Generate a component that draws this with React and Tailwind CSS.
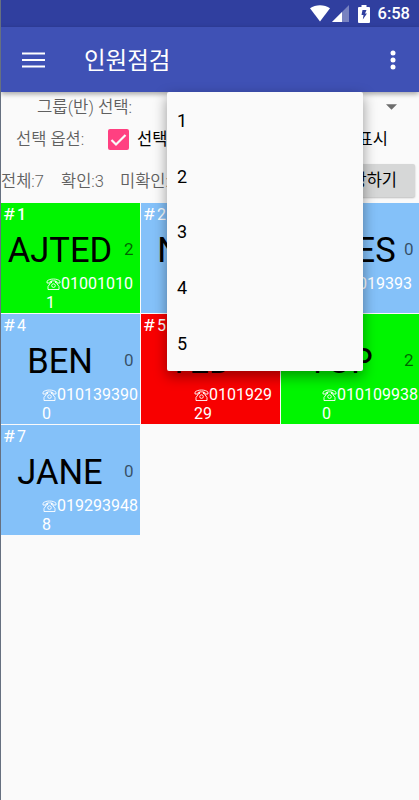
import React, { useState } from 'react';

const members = [
  { id: 1, name: 'AJTED', count: 2, phone: ['01001010', '1'], status: 'checked', bold: true, indent: 'pl-[45px]' },
  { id: 2, name: 'NATE', count: 0, phone: ['01012345', '6'], status: 'none', indent: 'pl-[45px]' },
  { id: 3, name: 'JAMES', count: 0, phone: ['01019393', '9'], status: 'none', indent: 'pl-[44px]' },
  { id: 4, name: 'BEN', count: 0, phone: ['010139390', '0'], status: 'none', indent: 'pl-[41px]' },
  { id: 5, name: 'TED', count: 1, phone: ['0101929', '29'], status: 'absent', indent: 'pl-[53px]' },
  { id: 6, name: 'TOP', count: 2, phone: ['010109938', '0'], status: 'checked', indent: 'pl-[41px]' },
  { id: 7, name: 'JANE', count: 0, phone: ['019293948', '8'], status: 'none', indent: 'pl-[41px]' },
];

const groups = [1, 2, 3, 4, 5];

// Background of a member cell
const getStatusClass = (status) => {
  switch (status) {
    case 'checked':
      return 'bg-[#00f500]';
    case 'absent':
      return 'bg-[#f80000]';
    default:
      return 'bg-[#84c1f9]';
  }
};

const StatusBar = () => (
  <div className="h-[27px] bg-[#303f9f] flex items-center justify-end pr-[9px] text-white">
    <svg width="20" height="17" viewBox="0 0 20 17" fill="currentColor">
      <path d="M0 3.200C5.500-.9 14.500-.9 20 3.200L10 16.500z" />
    </svg>
    <svg width="17" height="17" viewBox="0 0 17 17" className="ml-[2px]" fill="currentColor">
      <path d="M17 0v17H0z" opacity=".35" />
      <path d="M10 7v10H0z" />
    </svg>
    <svg width="12" height="18" viewBox="0 0 12 18" className="ml-[9px]" fill="currentColor">
      <path d="M3.500 0h5v2H11a1 1 0 0 1 1 1v14a1 1 0 0 1-1 1H1a1 1 0 0 1-1-1V3a1 1 0 0 1 1-1h2.500z" />
      <path d="M4.500 5h4L7 8.500h2L4.800 14.500l.7-4.500h-2z" fill="#303f9f" />
    </svg>
    <span className="ml-[8px] translate-y-px text-[16.5px] leading-none font-medium">6:58</span>
  </div>
);

const PhoneIcon = () => (
  <svg width="15" height="12" viewBox="0 0 15 12" className="mt-px" fill="none" stroke="currentColor" strokeWidth="0.9">
    <path d="M1 5V3.200C3.500.3 11.500.3 14 3.200V5h-3.200V3.500C9 2.600 6 2.600 4.200 3.500V5z" />
    <path d="M4.800 4.500L2 8.500v3h11v-3l-2.800-4M5.500 3v2M9.500 3v2" />
    <circle cx="7.500" cy="7.600" r="1.800" />
  </svg>
);

const MemberCell = ({ member }) => (
  <div className={`${getStatusClass(member.status)} h-[110px] overflow-hidden`}>
    <div className="flex h-[23px] gap-[3px] pl-[2px] text-[16px] leading-[23px] text-white">
      <span className="w-[11px] origin-left scale-x-[1.2]">#</span>
      <span className={member.bold ? 'font-medium' : ''}>{member.id}</span>
    </div>
    <div className="flex h-[48px] items-center">
      <div className="w-[118px] text-center text-[34.500px] leading-none whitespace-nowrap text-black">{member.name}</div>
      <div className="pl-[5px] text-[17px] text-black/60">{member.count}</div>
    </div>
    <div className={`${member.indent} text-[16px] leading-[19px] text-white whitespace-nowrap`}>
      <div className="flex h-[19px] items-center">
        <PhoneIcon />
        {member.phone[0]}
      </div>
      <div className="h-[19px]">{member.phone[1]}</div>
    </div>
  </div>
);

const GroupMenu = ({ onSelect }) => (
  <div className="absolute top-[92px] left-[166px] z-10 h-[279px] w-[196px] overflow-hidden rounded-[2px] bg-[#fafafa] shadow-[0_5px_14px_rgba(0,0,0,0.4)]">
    {groups.map((group) => (
      <button
        key={group}
        onClick={() => onSelect(group)}
        className="flex h-[55.800px] w-full items-center pt-px pl-[10px] text-[18px] text-black"
      >
        {group}
      </button>
    ))}
  </div>
);

const App = () => {
  const [menuOpen, setMenuOpen] = useState(true);

  return (
    <div className="relative h-[800px] w-[419px] overflow-hidden border-l border-[#667080] bg-[#fafafa] font-[Roboto,'Noto_Sans_CJK_KR',sans-serif]">
      <StatusBar />
      <header className="relative flex h-[65px] items-center bg-[#3f51b5] pr-[21px] pl-[21px] text-white shadow-[0_2px_5px_rgba(0,0,0,0.35)]">
        <svg width="23" height="16" viewBox="0 0 23 16" fill="currentColor">
          <path d="M0 .5h23v2H0zM0 7h23v2H0zM0 13.500h23v2H0z" />
        </svg>
        <h1 className="ml-[39px] pt-[5px] text-[23.500px] leading-none">인원점검</h1>
        <svg width="6" height="20" viewBox="0 0 6 20" className="mr-[2px] ml-auto" fill="currentColor">
          <circle cx="3" cy="3" r="2.500" />
          <circle cx="3" cy="10" r="2.500" />
          <circle cx="3" cy="17" r="2.500" />
        </svg>
      </header>

      <div className="flex h-[29px] items-center pr-[22px] pl-[36px]">
        <span className="pt-[3px] text-[16.700px] font-[350] text-[#606060]">그룹(반) 선택:</span>
        <button onClick={() => setMenuOpen(!menuOpen)} className="ml-auto">
          <svg width="11" height="6" viewBox="0 0 12 6" fill="#6d6d6d">
            <path d="M0 0h12L6 6z" />
          </svg>
        </button>
      </div>

      <div className="flex h-[36px] items-center pr-[31px] pl-[15px] text-[16.500px] whitespace-nowrap">
        <span className="w-[92px] pt-[2px] font-[350] text-[#606060]">선택 옵션:</span>
        <svg width="21" height="21" viewBox="0 0 21 21">
          <rect width="21" height="21" rx="2" fill="#ff4081" />
          <path d="M3.500 11l4.500 4.500L17.500 6" fill="none" stroke="#fafafa" strokeWidth="2.200" />
        </svg>
        <span className="ml-[8px] pt-[3px] text-black">선택모드</span>
        <span className="ml-auto pt-[3px] text-black">이름 표시</span>
      </div>

      <div className="flex h-[46px] items-center pr-[4px] text-[16.500px] text-[#606060] whitespace-nowrap">
        <span className="w-[60px] pt-[4px] font-[350]">전체:7</span>
        <span className="w-[59px] pt-[4px] font-[350]">확인:3</span>
        <span className="pt-[4px] font-[350]">미확인:4</span>
        <button className="ml-auto h-[33px] rounded-[2px] bg-[#d6d7d7] px-[18px] pt-[3px] font-normal text-black shadow-[0_1px_2px_rgba(0,0,0,0.25)]">
          저장하기
        </button>
      </div>

      <div className="grid grid-cols-[139px_139px_138px] gap-px bg-[#fafafa]">
        {members.map((member) => (
          <MemberCell key={member.id} member={member} />
        ))}
      </div>

      {menuOpen && <GroupMenu onSelect={() => setMenuOpen(false)} />}
    </div>
  );
};

export default App;
